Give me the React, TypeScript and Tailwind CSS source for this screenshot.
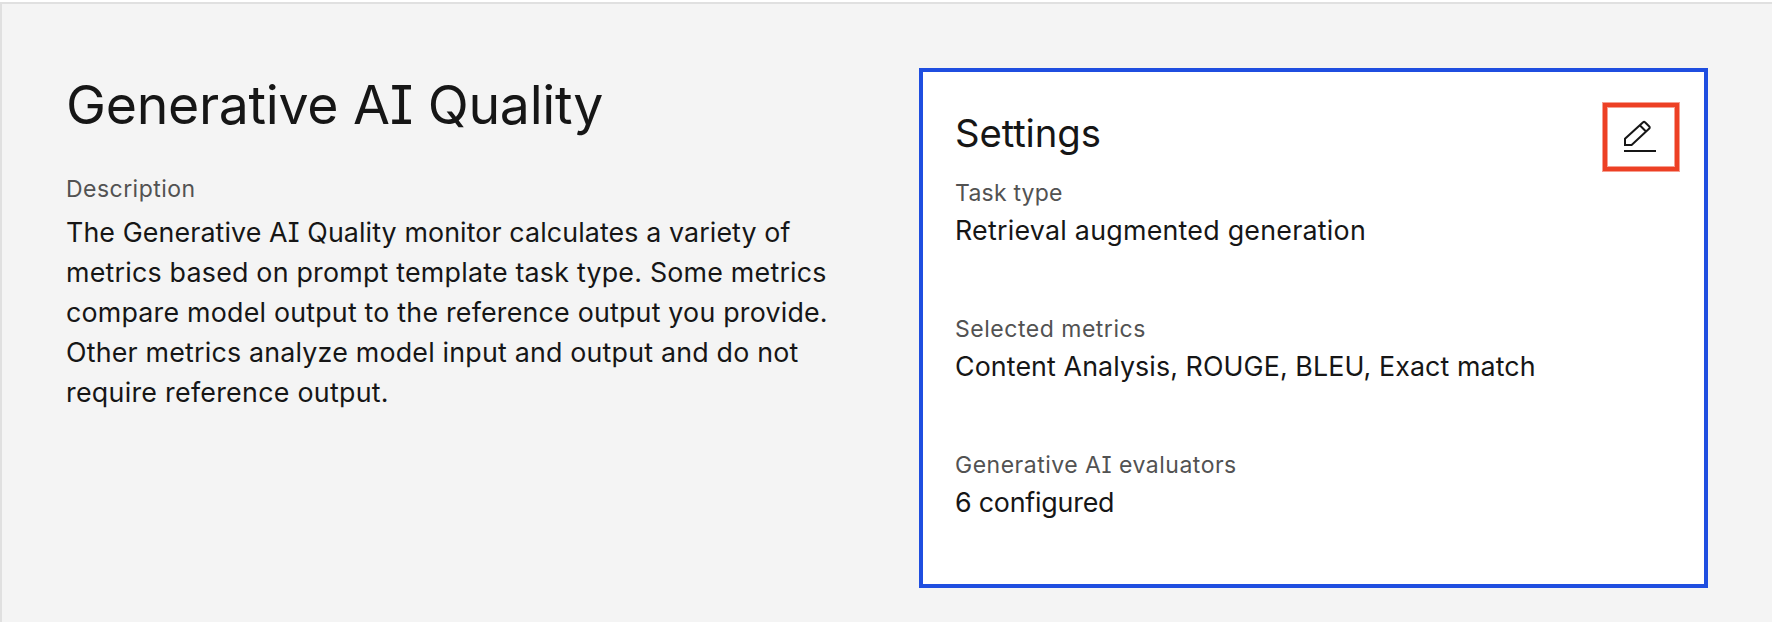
const settings = [
  { label: "Task type", value: "Retrieval augmented generation", labelTracking: "tracking-[0.22px]", valueTracking: "tracking-[0.25px]" },
  { label: "Selected metrics", value: "Content Analysis, ROUGE, BLEU, Exact match", labelTracking: "tracking-[0.52px]", valueTracking: "tracking-[0.1px]" },
  { label: "Generative AI evaluators", value: "6 configured", labelTracking: "tracking-[0.5px]", valueTracking: "tracking-[-0.2px]" },
];

const description = [
  { text: "The Generative AI Quality monitor calculates a variety of", tracking: "tracking-[0.11px]" },
  { text: "metrics based on prompt template task type. Some metrics", tracking: "tracking-[0.22px]" },
  { text: "compare model output to the reference output you provide.", tracking: "tracking-[0.21px]" },
  { text: "Other metrics analyze model input and output and do not", tracking: "tracking-[0.2px]" },
  { text: "require reference output.", tracking: "tracking-[0.28px]" },
];

function EditIcon() {
  return (
    <svg viewBox="0 0 32 32" className="size-8 fill-none stroke-[#161616] stroke-2" aria-hidden="true">
      <path d="M0 31h32" />
      <path d="M1 18.800V25h6.600L25.300 8.400a1.300 1.300 0 0 0 0-1.900L21 2.200a1.300 1.300 0 0 0-1.900 0L1 18.800zM15.800 5.300l6.200 6.200" />
    </svg>
  );
}

export default function App() {
  return (
    <div className="h-[622px] w-full overflow-hidden bg-white pt-[2px] font-[Inter,sans-serif] text-[#161616] [font-feature-settings:'cv08']">
      <main className="flex h-full items-start border-t-2 border-l-2 border-[#e0e0e0] bg-[#f4f4f4] pl-16">
        <section className="w-[853px] shrink-0 pt-[69px]">
          <h1 className="text-[53.6px] leading-[64px] tracking-[-0.3px]">Generative AI Quality</h1>
          <h2 className="mt-[36px] text-[23px] leading-8 tracking-[0.46px] text-[#525252]">Description</h2>
          <p className="mt-[7px] text-[26.8px] leading-10 whitespace-nowrap">
            {description.map((line) => (
              <span key={line.text} className={`block ${line.tracking}`}>{line.text}</span>
            ))}
          </p>
        </section>
        <section className="mt-16 h-[520px] w-[789px] shrink-0 border-4 border-[#1f4ee0] bg-white pt-[31px] pr-[25px] pl-8">
          <header className="flex h-[68px] items-start justify-between">
            <h2 className="pt-[6px] text-[38.3px] leading-[48px] tracking-[-0.1px]">Settings</h2>
            <button
              aria-label="Edit settings"
              className="flex h-[68px] w-[76px] items-start justify-start border-4 border-[#ed4024] pt-[13px] pl-[17px] shadow-[0_0_0_1px_#ed402480,inset_0_0_0_1px_#ed402480]"
            >
              <EditIcon />
            </button>
          </header>
          <dl className="mt-[6px] flex flex-col gap-[64px]">
            {settings.map((s) => (
              <div key={s.label} className="h-[72px]">
                <dt className={`text-[23px] leading-8 text-[#525252] ${s.labelTracking}`}>{s.label}</dt>
                <dd className={`mt-[1px] text-[26.8px] leading-10 ${s.valueTracking}`}>{s.value}</dd>
              </div>
            ))}
          </dl>
        </section>
      </main>
    </div>
  );
}
